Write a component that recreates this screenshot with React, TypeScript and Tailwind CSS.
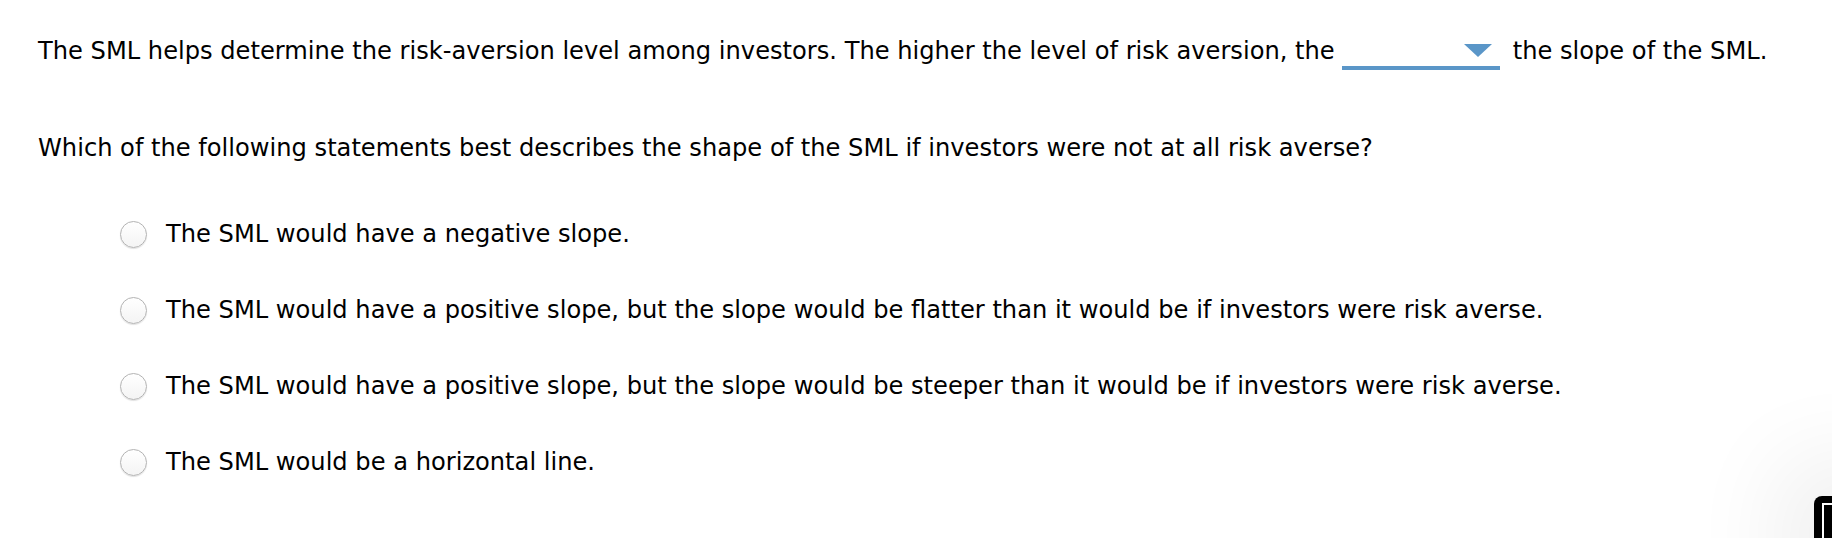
const options = [
  "The SML would have a negative slope.",
  "The SML would have a positive slope, but the slope would be flatter than it would be if investors were risk averse.",
  "The SML would have a positive slope, but the slope would be steeper than it would be if investors were risk averse.",
  "The SML would be a horizontal line.",
];

export default function App() {
  return (
    <div className="relative h-[538px] w-[1832px] overflow-hidden bg-white text-black">
      <div className="flex flex-col pl-[38px] pt-[37px] font-['DejaVu_Sans',sans-serif] text-[24.15px] leading-[28px]">
        <div className="flex items-start">
          <span>
            The SML helps determine the risk-aversion level among investors. The higher the level of risk
            aversion, the
          </span>
          <button className="relative ml-[7px] mr-[13px] h-[33px] w-[158px] shrink-0 border-b-4 border-[#5a96c8]">
            <span className="absolute right-[8px] top-[7px] h-0 w-0 border-x-[14px] border-t-[13px] border-x-transparent border-t-[#5a96c8]" />
          </button>
          <span>the slope of the SML.</span>
        </div>
        <p className="mt-[64px]">
          Which of the following statements best describes the shape of the SML if investors were not at all risk
          averse?
        </p>
      </div>

      <div className="mt-[58px] flex flex-col gap-[48px] pl-[120px] font-['DejaVu_Sans',sans-serif] text-[24.15px] leading-[28px]">
        {options.map((o) => (
          <label key={o} className="flex items-center">
            <span className="h-[27px] w-[27px] shrink-0 rounded-full border border-[#b3b3b3] bg-gradient-to-b from-white to-[#f4f4f4] shadow-[0_1px_1px_rgba(0,0,0,0.12)]" />
            <span className="ml-[19px] whitespace-nowrap">{o}</span>
          </label>
        ))}
      </div>

      <div className="absolute left-[1814px] top-[496px] h-[80px] w-[80px] rounded-[8px] bg-black shadow-[0_0_90px_40px_rgba(0,0,0,0.06)]">
        <div className="absolute left-[8px] top-[7px] h-[60px] w-[60px] border-2 border-white" />
      </div>
    </div>
  );
}
